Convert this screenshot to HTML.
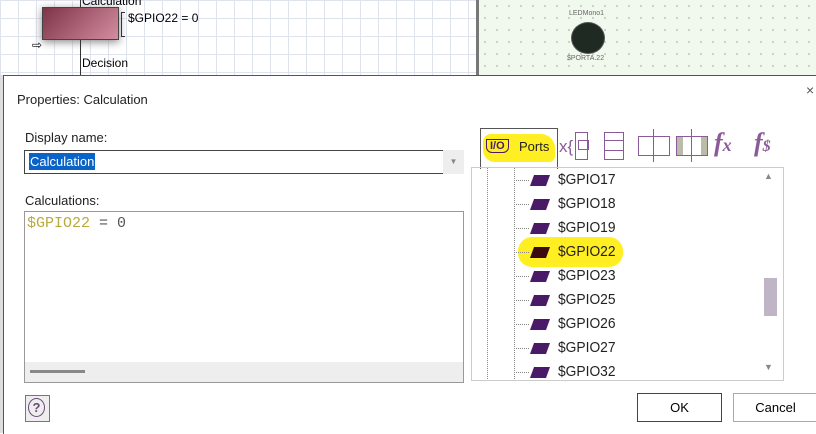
<!DOCTYPE html>
<html><head><style>
body{margin:0;width:816px;height:433px;overflow:hidden;position:relative;font-family:"Liberation Sans",sans-serif;background:#fff}
.a{position:absolute}
.grid{background-color:#fff;background-image:linear-gradient(#dfe3ee 1px,transparent 1px),linear-gradient(90deg,#dfe3ee 1px,transparent 1px);background-size:18px 18px}
.green{background-color:#f1f9ee;background-image:radial-gradient(#c6cfc4 1px,transparent 1.2px);background-size:12px 12px}
.it{position:absolute;left:530px;font-size:15px;color:#222;transform:scaleX(.92);transform-origin:left}
.ic{position:absolute;left:532px;width:16px;height:11px;background:#4a1a66;transform:skewX(-20deg)}
.dl{position:absolute;left:514px;width:15px;border-top:1px dotted #888}
.bx{position:absolute;border:1.5px solid #8a5a9a}
</style></head><body>
<div class="a grid" style="left:0;top:0;width:476px;height:80px"></div>
<div class="a" style="left:476px;top:0;width:3px;height:80px;background:#777"></div>
<div class="a green" style="left:479px;top:0;width:337px;height:80px"></div>
<div class="a" style="left:42px;top:7px;width:75px;height:31px;background:linear-gradient(135deg,#7e3448,#d48da0);border:1px solid #444;box-shadow:0 2px 8px #888"></div>
<div class="a" style="left:80px;top:0;width:1px;height:7px;background:#333"></div>
<div class="a" style="left:80px;top:40px;width:1px;height:36px;background:#333"></div>
<div class="a" style="left:82px;top:-6px;font-size:12px">Calculation</div>
<div class="a" style="left:82px;top:56px;font-size:12px">Decision</div>
<div class="a" style="left:121px;top:12px;width:3px;height:23px;border:1px solid #333;border-right:none"></div>
<div class="a" style="left:128px;top:11px;font-size:12px">$GPIO22 = 0</div>
<div class="a" style="left:32px;top:38px;font-size:12px">⇨</div>
<div class="a" style="left:571px;top:22px;width:32px;height:30px;border-radius:50%;background:#1f2a22;border:1px solid #555"></div>
<div class="a" style="left:569px;top:10px;font-size:7px;color:#666">LEDMono1</div>
<div class="a" style="left:567px;top:55px;font-size:7px;color:#666">$PORTA.22</div>

<div class="a" style="left:3px;top:75px;width:813px;height:358px;background:#fff;border-left:1px solid #555;border-top:1px solid #555"></div>
<div class="a" style="left:0;top:75px;width:3px;height:358px;background:#ddd"></div>
<div class="a" style="left:17px;top:92px;font-size:13px;color:#222">Properties: Calculation</div>
<div class="a" style="left:806px;top:82px;font-size:14px;color:#555">×</div>

<div class="a" style="left:25px;top:130px;font-size:13px;color:#222">Display name:</div>
<div class="a" style="left:24px;top:150px;width:418px;height:22px;border:1px solid #444"></div>
<div class="a" style="left:443px;top:150px;width:21px;height:24px;background:#eee;font-size:8px;color:#888;text-align:center;line-height:24px">▼</div>
<div class="a" style="left:29px;top:153px;height:17px;background:#0a64c8;color:#fff;font-size:13px;line-height:17px;padding:0 1px">Calculation</div>
<div class="a" style="left:25px;top:193px;font-size:13px;color:#222">Calculations:</div>
<div class="a" style="left:24px;top:211px;width:438px;height:170px;border:1px solid #999"></div>
<div class="a" style="left:25px;top:362px;width:438px;height:20px;background:#eee"></div>
<div class="a" style="left:30px;top:370px;width:55px;height:3px;background:#888"></div>
<div class="a" style="left:27px;top:215px;font-family:'Liberation Mono',monospace;font-size:15px;color:#555"><span style="color:#b9aa3c">$GPIO22</span> = 0</div>

<div class="a" style="left:480px;top:128px;width:76px;height:40px;border:1px solid #555;border-bottom:none;background:#fff"></div>
<div class="a" style="left:483px;top:134px;width:72px;height:28px;background:#ffee22;border-radius:8px 14px 6px 12px"></div>
<div class="a" style="left:486px;top:139px;font-size:11px;font-weight:bold;color:#4a1a66;border:1.5px solid #4a1a66;border-radius:0 0 6px 6px;padding:0 3px">I/O</div>
<div class="a" style="left:519px;top:139px;font-size:13px;color:#222">Ports</div>
<div class="a" style="left:559px;top:137px;font-size:17px;color:#8a5a9a">x{</div>
<div class="bx" style="left:575px;top:132px;width:11px;height:26px"></div>
<div class="bx" style="left:578px;top:140px;width:9px;height:8px"></div>
<div class="bx" style="left:604px;top:132px;width:18px;height:26px"></div>
<div class="bx" style="left:604px;top:140px;width:18px;height:9px"></div>
<div class="bx" style="left:638px;top:136px;width:30px;height:18px"></div>
<div class="a" style="left:653px;top:129px;width:1px;height:33px;background:#8a5a9a"></div>
<div class="bx" style="left:676px;top:136px;width:30px;height:18px;background:linear-gradient(90deg,#bba 0 6px,transparent 6px 24px,#bba 24px)"></div>
<div class="a" style="left:691px;top:129px;width:1px;height:33px;background:#8a5a9a"></div>
<div class="a" style="left:714px;top:128px;font-size:26px;font-style:italic;font-weight:bold;color:#8a5a9a;font-family:'Liberation Serif',serif">f<span style="font-size:18px">x</span></div>
<div class="a" style="left:754px;top:128px;font-size:26px;font-style:italic;font-weight:bold;color:#8a5a9a;font-family:'Liberation Serif',serif">f<span style="font-size:16px">$</span></div>

<div class="a" style="left:471px;top:167px;width:311px;height:212px;border:1px solid #ccc"></div>
<div class="a" style="left:487px;top:168px;height:211px;border-left:1px dotted #888"></div>
<div class="a" style="left:514px;top:168px;height:211px;border-left:1px dotted #888"></div>
<div class="a" style="left:518px;top:237px;width:105px;height:30px;background:#ffee22;border-radius:14px"></div>
<div class="a" style="left:764px;top:278px;width:13px;height:38px;background:#c0b5c6"></div>
<div class="a" style="left:764px;top:171px;font-size:9px;color:#888">▲</div>
<div class="a" style="left:764px;top:362px;font-size:9px;color:#888">▼</div>

<div class="dl" style="top:180px"></div><div class="ic" style="top:175px"></div><div class="it" style="left:558px;top:171px">$GPIO17</div>
<div class="dl" style="top:204px"></div><div class="ic" style="top:199px"></div><div class="it" style="left:558px;top:195px">$GPIO18</div>
<div class="dl" style="top:228px"></div><div class="ic" style="top:223px"></div><div class="it" style="left:558px;top:219px">$GPIO19</div>
<div class="dl" style="top:252px"></div><div class="ic" style="top:247px;background:#3a0a10"></div><div class="it" style="left:558px;top:243px">$GPIO22</div>
<div class="dl" style="top:276px"></div><div class="ic" style="top:271px"></div><div class="it" style="left:558px;top:267px">$GPIO23</div>
<div class="dl" style="top:300px"></div><div class="ic" style="top:295px"></div><div class="it" style="left:558px;top:291px">$GPIO25</div>
<div class="dl" style="top:324px"></div><div class="ic" style="top:319px"></div><div class="it" style="left:558px;top:315px">$GPIO26</div>
<div class="dl" style="top:348px"></div><div class="ic" style="top:343px"></div><div class="it" style="left:558px;top:339px">$GPIO27</div>
<div class="dl" style="top:372px"></div><div class="ic" style="top:367px"></div><div class="it" style="left:558px;top:363px">$GPIO32</div>

<div class="a" style="left:25px;top:395px;width:23px;height:25px;border:1px solid #777;background:#eee"></div>
<div class="a" style="left:28px;top:398px;width:15px;height:17px;border:1.5px solid #6a4a7a;border-radius:50%;font-size:13px;font-weight:bold;color:#6a4a7a;text-align:center;line-height:17px">?</div>
<div class="a" style="left:637px;top:393px;width:83px;height:27px;border:1px solid #444;font-size:13px;text-align:center;line-height:27px">OK</div>
<div class="a" style="left:733px;top:393px;width:83px;height:27px;border:1px solid #aaa;font-size:13px;text-align:center;line-height:27px">Cancel</div>
</body></html>
